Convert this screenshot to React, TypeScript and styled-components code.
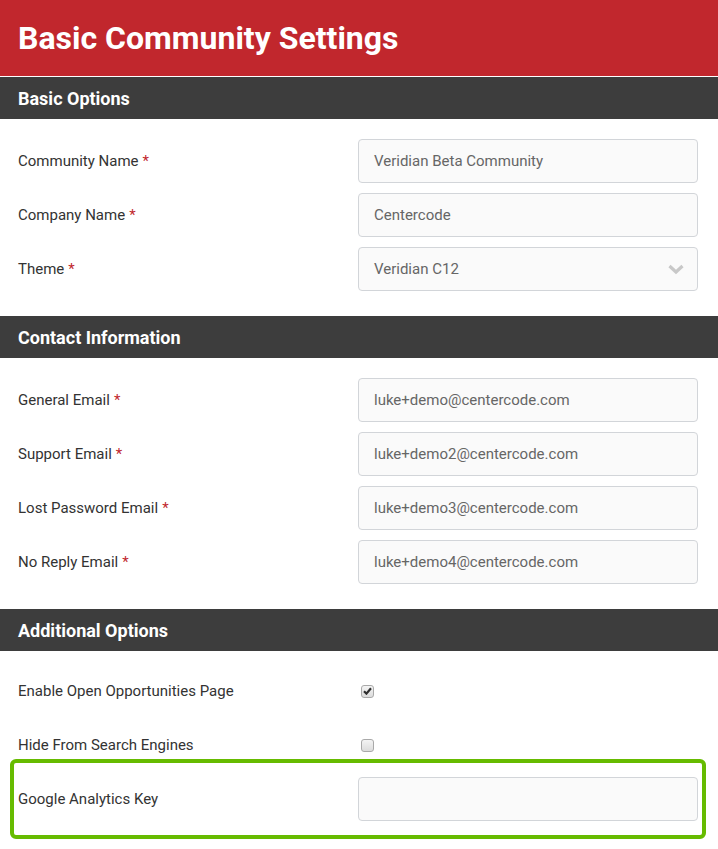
import React from "react";
import styled, { createGlobalStyle } from "styled-components";

const GlobalStyle = createGlobalStyle`
  html, body {
    margin: 0;
    padding: 0;
    background: #ffffff;
    font-family: Roboto, "Liberation Sans", Arial, sans-serif;
  }
`;

const Page = styled.div`
  width: 718px;
  background: #ffffff;
`;

const PageHeader = styled.header`
  height: 76px;
  background: #c1272d;
  border-bottom: 1px solid #ffffff;
  display: flex;
  align-items: center;
  padding: 0 18px;
`;

const PageTitle = styled.h1`
  margin: 0;
  color: #ffffff;
  font-size: 32px;
  font-weight: 700;
`;

const SectionBar = styled.div`
  height: 42px;
  background: #3d3d3d;
  display: flex;
  align-items: center;
  padding: 0 18px;
`;

const SectionTitle = styled.h2`
  margin: 0;
  color: #ffffff;
  font-size: 18px;
  font-weight: 700;
`;

const SectionBody = styled.div<{ $top?: number; $bottom?: number }>`
  display: flex;
  flex-direction: column;
  gap: 10px;
  padding: ${(p) => p.$top ?? 20}px 20px ${(p) => p.$bottom ?? 25}px 18px;
`;

const Row = styled.div<{ $highlight?: boolean; $tall?: boolean }>`
  position: relative;
  display: flex;
  align-items: center;
  height: ${(p) => (p.$tall ? 52 : 44)}px;

  ${(p) =>
    p.$highlight &&
    `
    &::before {
      content: "";
      position: absolute;
      top: -18px;
      bottom: -18px;
      left: -8px;
      right: -8px;
      border: 4px solid #66bb00;
      border-radius: 6px;
      pointer-events: none;
    }
  `}
`;

const Label = styled.label`
  width: 340px;
  flex-shrink: 0;
  color: #333333;
  font-size: 15px;
`;

const Required = styled.span`
  color: #c1272d;
  margin-left: 4px;
`;

const FieldBox = styled.div`
  position: relative;
  flex: 1;
  height: 44px;
  box-sizing: border-box;
  border: 1px solid #d2d5d9;
  border-radius: 4px;
  background: #fafafa;
  display: flex;
  align-items: center;
  padding: 0 15px;
  color: #666666;
  font-size: 15px;
`;

const Chevron = styled.svg`
  position: absolute;
  right: 12px;
  top: 15px;
`;

const Check = styled.span`
  display: inline-flex;
  align-items: center;
  justify-content: center;
  width: 11px;
  height: 11px;
  margin-left: 3px;
  border: 1px solid #a9a9a9;
  border-radius: 3px;
  background: linear-gradient(#f4f4f4, #dcdcdc);
`;

const Field = ({ value, select }: { value?: string; select?: boolean }) => (
  <FieldBox>
    {value}
    {select && (
      <Chevron width="18" height="12" viewBox="0 0 18 12">
        <path d="M2.5 3 L9 9 L15.5 3" fill="none" stroke="#c8c8c8" strokeWidth="3.2" />
      </Chevron>
    )}
  </FieldBox>
);

const Checkbox = ({ checked }: { checked?: boolean }) => (
  <Check>
    {checked && (
      <svg width="9" height="8" viewBox="0 0 9 8">
        <path d="M1 4.3 L3.4 6.6 L8 1.2" fill="none" stroke="#2f2f2f" strokeWidth="2.2" />
      </svg>
    )}
  </Check>
);

const basic = [
  { label: "Community Name", value: "Veridian Beta Community" },
  { label: "Company Name", value: "Centercode" },
  { label: "Theme", value: "Veridian C12", select: true },
];

const contact = [
  { label: "General Email", value: "luke+demo@centercode.com" },
  { label: "Support Email", value: "luke+demo2@centercode.com" },
  { label: "Lost Password Email", value: "luke+demo3@centercode.com" },
  { label: "No Reply Email", value: "luke+demo4@centercode.com" },
];

const App: React.FC = () => {
  return (
    <Page>
      <GlobalStyle />
      <PageHeader>
        <PageTitle>Basic Community Settings</PageTitle>
      </PageHeader>

      <SectionBar>
        <SectionTitle>Basic Options</SectionTitle>
      </SectionBar>
      <SectionBody>
        {basic.map((r) => (
          <Row key={r.label}>
            <Label>
              {r.label}
              <Required>*</Required>
            </Label>
            <Field value={r.value} select={r.select} />
          </Row>
        ))}
      </SectionBody>

      <SectionBar>
        <SectionTitle>Contact Information</SectionTitle>
      </SectionBar>
      <SectionBody>
        {contact.map((r) => (
          <Row key={r.label}>
            <Label>
              {r.label}
              <Required>*</Required>
            </Label>
            <Field value={r.value} />
          </Row>
        ))}
      </SectionBody>

      <SectionBar>
        <SectionTitle>Additional Options</SectionTitle>
      </SectionBar>
      <SectionBody $top={18}>
        <Row>
          <Label>Enable Open Opportunities Page</Label>
          <Checkbox checked />
        </Row>
        <Row>
          <Label>Hide From Search Engines</Label>
          <Checkbox />
        </Row>
        <Row $highlight>
          <Label>Google Analytics Key</Label>
          <Field />
        </Row>
        <Row $tall>
          <Label>
            Community Landing Page
            <Required>*</Required>
          </Label>
        </Row>
      </SectionBody>
    </Page>
  );
};

export default App;
